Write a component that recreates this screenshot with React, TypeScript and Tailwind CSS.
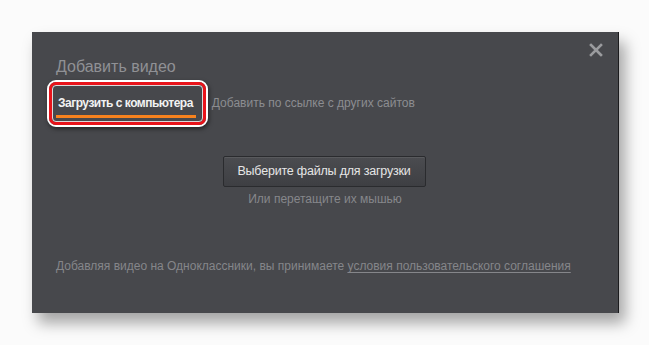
export default function App() {
  return (
    <div className="min-h-[345px] w-[649px] bg-[#fbfbfb] pl-[32px] pt-[32px] font-['Liberation_Sans',Arial,sans-serif]">
      <div className="relative h-[281px] w-[587px] border-r border-[#1c1c1e] bg-[#47484c] pl-[24px] pr-[24px] pt-[25px] shadow-[6px_10px_14px_rgba(0,0,0,0.35)]">
        {/* close */}
        <button className="absolute right-[14px] top-[10px] flex h-[16px] w-[16px] items-center justify-center">
          <svg width="14" height="14" viewBox="0 0 14 14" fill="none" stroke="#9a9b9e" strokeWidth="2.6" strokeLinecap="square">
            <path d="M2 2l10 10M12 2L2 12" />
          </svg>
        </button>

        <h1 className="text-[16px] leading-[20px] text-[#909195]">Добавить видео</h1>

        {/* tabs */}
        <div className="relative mt-[19px] flex items-start">
          <div className="relative flex flex-col">
            <span className="pl-[2px] pr-[4px] text-[12px] font-bold leading-[14px] tracking-[-0.5px] text-[#f2f2f2]">
              Загрузить с компьютера
            </span>
            <div className="mt-[5px] h-[3px] w-[140px] bg-[#f7821e]" />
            {/* red highlight */}
            <div className="absolute -left-[9px] -top-[16px] h-[47px] w-[161px] rounded-[9px] border-2 border-white shadow-[1px_2px_4px_rgba(0,0,0,0.5)]">
              <div className="h-full w-full rounded-[7px] border-[3px] border-[#e8141b]">
                <div className="h-full w-full rounded-[4px] border border-white/80" />
              </div>
            </div>
          </div>
          <span className="ml-[15px] text-[12px] leading-[14px] text-[#8c8d91]">
            Добавить по ссылке с других сайтов
          </span>
        </div>

        {/* upload */}
        <div className="mt-[38px] flex flex-col items-center">
          <button className="-ml-[2px] h-[31px] w-[203px] rounded-[2px] border border-[#2a2b2e] bg-gradient-to-b from-[#4b4c50] to-[#3e3f43] text-[12.5px] leading-[15px] tracking-[-0.2px] text-[#e6e6e6] shadow-[inset_0_1px_0_rgba(255,255,255,0.08)]">
            Выберите файлы для загрузки
          </button>
          <span className="mt-[5px] text-[12px] leading-[14px] text-[#86878b]">
            Или перетащите их мышью
          </span>
        </div>

        <p className="mt-[53px] text-[12px] leading-[14px] text-[#85868a]">
          Добавляя видео на Одноклассники, вы принимаете{" "}
          <a className="underline underline-offset-2 text-[#85868a]">условия пользовательского соглашения</a>
        </p>
      </div>
    </div>
  );
}
